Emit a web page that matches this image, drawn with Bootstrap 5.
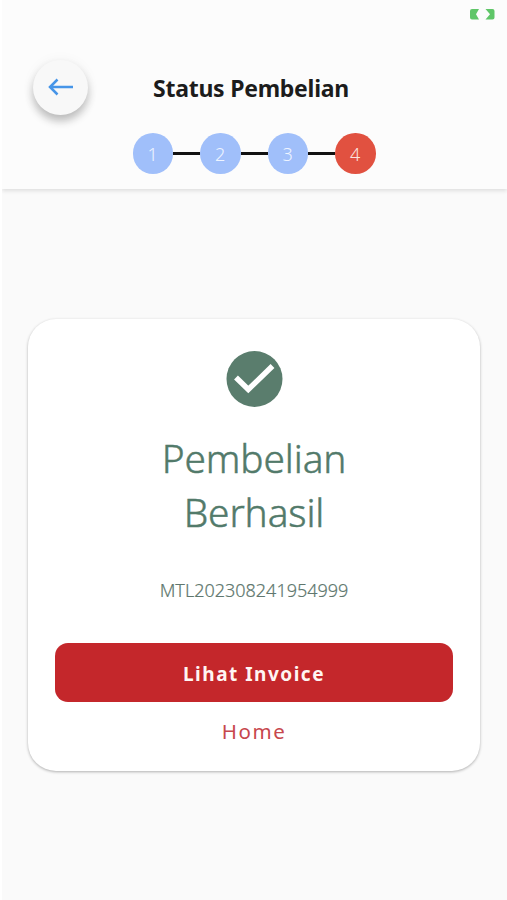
<!DOCTYPE html>
<html lang="id">
<head>
<meta charset="utf-8">
<meta name="viewport" content="width=device-width, initial-scale=1">
<title>Status Pembelian</title>
<link href="https://cdn.jsdelivr.net/npm/bootstrap@5.3.0/dist/css/bootstrap.min.css" rel="stylesheet">
<style>
body { font-family: "Noto Sans", "Open Sans", sans-serif; background: #fff; height: 900px; overflow: hidden; }
.screen { height: 900px; margin-left: 2px; background: #fafafa; }
.topbar { height: 189px; background: #fcfcfc; box-shadow: 0 2px 4px rgba(0,0,0,.11); clip-path: inset(0 0 -10px 0); }
.statusbar { height: 58px; padding: 9px 12px 0 0; }
.title-row { height: 58px; padding-left: 31px; }
.back { width: 55px; height: 55px; background: #f8f8f8; box-shadow: 0 6px 8px rgba(0,0,0,.24), 0 1px 14px rgba(0,0,0,.05); }
.page-title { font-size: 23px; line-height: 32px; font-weight: 700; color: #1c1c1c; margin-left: 65px; padding-top: 2px; letter-spacing: -.25px; white-space: nowrap; }
.steps { padding: 17px 0 0 130.5px; }
.step { width: 40.5px; height: 40.5px; background: #a0bffa; color: #eef4ff; font-size: 18px; line-height: 1; font-weight: 300; padding-top: 2px; }
.step-now { background: #e15140; color: #fbe3df; }
.step-line { width: 27px; height: 3px; background: #111; }
.result { width: 452px; height: 452px; margin: 130px 0 0 26px; border-radius: 28px; background: #fff; padding: 32px 27px 0; box-shadow: 0 1px 3px rgba(0,0,0,.3); }
.result-title { font-size: 38.8px; line-height: 54px; font-weight: 300; letter-spacing: -.1px; color: #527a6a; -webkit-text-stroke: .5px #527a6a; margin: 23px 0 0; }
.code { font-size: 18px; line-height: 26px; font-weight: 300; color: #60776e; -webkit-text-stroke: .2px #60776e; margin-top: 38px; }
.btn-invoice { height: 59px; margin-top: 40px; padding-top: 9px; border: 0; border-radius: 13px; background: #c4272b; color: #fff5f3; font-size: 19px; font-weight: 700; letter-spacing: 1.5px; }
.btn-invoice:hover { background: #ad2025; color: #fff; }
.home { font-size: 20.5px; line-height: 30px; letter-spacing: 1.6px; color: #c7474d; margin-top: 14px; }
</style>
<script src="https://cdn.jsdelivr.net/npm/bootstrap@5.3.0/dist/js/bootstrap.bundle.min.js"></script>
</head>
<body>
<main class="screen">
  <header class="topbar">
    <div class="statusbar d-flex justify-content-end align-items-start">
      <svg width="25" height="11" viewBox="0 0 25 11" fill="#5fc668"><path d="M2 0H9L6 5.2L9 10.4H2Q0 10.4 0 8.4V2Q0 0 2 0ZM15.500 0H22.500Q24.500 0 24.500 2V8.400Q24.500 10.400 22.500 10.400H15.500L20 5.200Z"/></svg>
    </div>
    <div class="title-row d-flex align-items-center">
      <a href="#" class="back rounded-circle d-flex align-items-center justify-content-center flex-shrink-0" aria-label="Kembali">
        <svg width="26" height="18" viewBox="0 0 26 18" fill="none" stroke="#4695e8" stroke-width="2.5"><path d="M25 9H2.500M9.500 1.500L2 9L9.500 16.500"/></svg>
      </a>
      <h1 class="page-title mb-0">Status Pembelian</h1>
    </div>
    <div class="steps d-flex align-items-center">
      <div class="step rounded-circle d-flex align-items-center justify-content-center">1</div>
      <div class="step-line"></div>
      <div class="step rounded-circle d-flex align-items-center justify-content-center">2</div>
      <div class="step-line"></div>
      <div class="step rounded-circle d-flex align-items-center justify-content-center">3</div>
      <div class="step-line"></div>
      <div class="step step-now rounded-circle d-flex align-items-center justify-content-center">4</div>
    </div>
  </header>
  <section class="result d-flex flex-column text-center">
    <svg class="align-self-center flex-shrink-0" width="57" height="57" viewBox="0 0 57 57"><circle cx="28.500" cy="28" r="28" fill="#5a7d6d"/><path d="M10 26.500L22.300 38.500L46.500 15" fill="none" stroke="#fff" stroke-width="5.500"/></svg>
    <h2 class="result-title">Pembelian<br>Berhasil</h2>
    <div class="code">MTL202308241954999</div>
    <button type="button" class="btn btn-invoice w-100 flex-shrink-0">Lihat Invoice</button>
    <a href="#" class="home text-decoration-none align-self-center">Home</a>
  </section>
</main>
</body>
</html>
